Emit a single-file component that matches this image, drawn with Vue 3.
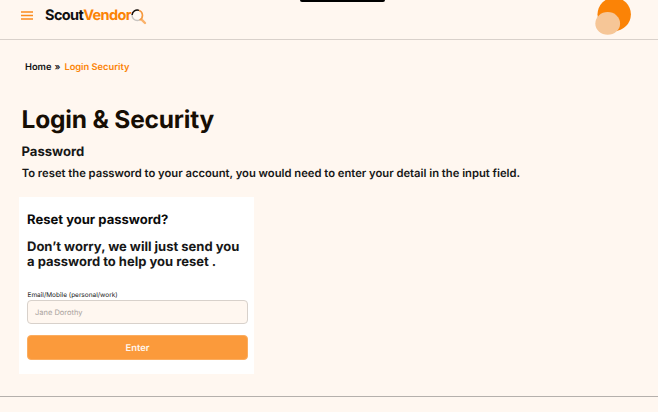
<script setup>
import { ref } from 'vue'

const contact = ref('')
</script>

<template>
  <div class="page">
    <header class="topbar">
      <div class="brand-group">
        <svg class="menu" width="12" height="9" viewBox="0 0 12 9" aria-label="Menu">
          <path d="M0 1H12M0 4.5H12M0 8H12" stroke="#fb8c1e" stroke-width="1.35" />
        </svg>
        <div class="brand">
          <span>Scout</span><span class="accent">Vendor</span>
          <svg class="lens" width="16" height="16" viewBox="0 0 16 16">
            <path d="M10.4 10.4L14 14" stroke="#fbb26a" stroke-width="2.4" stroke-linecap="round" />
            <circle cx="6.3" cy="6.3" r="5.2" fill="#fff9f4" stroke="#c9c5c1" stroke-width="1.4" />
            <path d="M1.1 6A5.2 5.2 0 0 1 8 1.4" fill="none" stroke="#17110b" stroke-width="1.5" />
            <path d="M8 1.4A5.2 5.2 0 0 1 8.6 11" fill="none" stroke="#fa9a3c" stroke-width="1.5" />
          </svg>
        </div>
      </div>
      <div class="notch"></div>
      <svg class="avatar" width="38" height="36" viewBox="0 0 38 36">
        <circle cx="19.2" cy="14.3" r="16.7" fill="#fb8306" />
        <ellipse cx="12.7" cy="23.4" rx="12.4" ry="11.3" fill="#f6c697" />
      </svg>
    </header>

    <main class="content">
      <nav class="crumbs">
        <span>Home</span><span class="sep">»</span><span class="current">Login Security</span>
      </nav>
      <h1>Login &amp; Security</h1>
      <h2>Password</h2>
      <p class="intro">To reset the password to your account, you would need to enter your detail in the input field.</p>

      <form class="card" @submit.prevent>
        <h3>Reset your password?</h3>
        <p class="message">Don’t worry, we will just send you<br />a password to help you reset .</p>
        <label for="contact">Email/Mobile (personal/work)</label>
        <input id="contact" v-model="contact" type="text" placeholder="Jane Dorothy" />
        <button type="submit">Enter</button>
      </form>
    </main>
    <footer class="footer"></footer>
  </div>
</template>

<style>
body {
  background: #fff7f0;
}
</style>

<style scoped>
* {
  box-sizing: border-box;
}
.page {
  height: 412px;
  overflow: hidden;
  background: #fff7f0;
  color: #171717;
  font-family: Inter, "Liberation Sans", sans-serif;
  text-rendering: geometricPrecision;
}
.topbar {
  position: relative;
  display: flex;
  justify-content: space-between;
  height: 40px;
  padding: 0 25px 0 21px;
  border-bottom: 1px solid #d9d1cb;
}
.brand-group {
  display: flex;
  align-items: flex-start;
  gap: 12px;
}
.menu {
  margin-top: 11px;
}
.brand {
  display: flex;
  padding-top: 7px;
  font-size: 14.5px;
  line-height: 18px;
  font-weight: 700;
  letter-spacing: -0.61px;
  color: #111;
}
.accent {
  color: #fb8306;
}
.lens {
  margin: 2px 0 0 -0.2px;
}
.notch {
  position: absolute;
  top: 0;
  left: 300px;
  width: 85px;
  height: 2px;
  background: #000;
  border-radius: 0 0 3px 3px;
}
.content {
  padding: 21px 19px 0;
}
.crumbs {
  display: flex;
  padding-left: 6px;
  font-size: 9.3px;
  line-height: 14px;
  font-weight: 600;
  color: #111;
}
.sep {
  margin: 0 4px 0 3px;
}
.current {
  color: #fb8306;
}
h1, h2, h3, p {
  margin: 0;
}
h1 {
  margin: 29px 0 0 2.5px;
  font-size: 24.5px;
  line-height: 30px;
  font-weight: 700;
  letter-spacing: -0.19px;
  color: #170e04;
}
h2 {
  margin: 9px 0 0 2.5px;
  font-size: 13.1px;
  line-height: 18px;
  font-weight: 700;
}
.intro {
  margin: 4px 0 0 2.7px;
  font-size: 11.22px;
  line-height: 16px;
  font-weight: 600;
  white-space: nowrap;
}
.card {
  display: flex;
  flex-direction: column;
  width: 235px;
  height: 177px;
  margin-top: 16px;
  padding: 16px 6px 0 8px;
  background: #fff;
}
h3 {
  font-size: 13.05px;
  line-height: 15px;
  font-weight: 700;
  color: #0b0b0b;
}
.message {
  margin-top: 12px;
  font-size: 13px;
  line-height: 15px;
  font-weight: 700;
  white-space: nowrap;
}
label {
  margin-top: 21px;
  padding-left: 0.5px;
  font-size: 6.5px;
  line-height: 9px;
}
input {
  height: 24px;
  margin: 0;
  padding: 0 7px;
  border: 1px solid #d8d1cb;
  border-radius: 4px;
  background: #fff7f0;
  font: 400 7.5px Inter, sans-serif;
  text-rendering: geometricPrecision;
  outline: none;
}
input::placeholder {
  color: #aaa39e;
  opacity: 1;
}
button {
  height: 25px;
  margin-top: 11px;
  padding: 1px 0 0;
  border: 1px solid #fbad60;
  border-radius: 4px;
  background: #fb9a3b;
  color: #fff6ee;
  font: 600 9.4px Inter, sans-serif;
  text-rendering: geometricPrecision;
}
.footer {
  margin-top: 22px;
  border-top: 1px solid #b5b0ac;
}
</style>
